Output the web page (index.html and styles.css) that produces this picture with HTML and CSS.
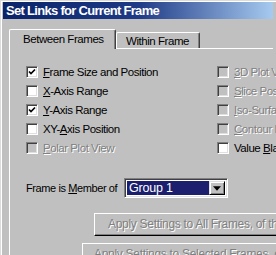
FILE: index.html
```html
<!DOCTYPE html>
<html>
<head>
    <title>Set Links for Current Frame</title>
    <link rel="stylesheet" href="styles.css">
</head>
<body>
    <div class="window">
        <div class="titlebar">Set Links for Current Frame</div>

        <div class="tabs">
            <div class="tab active">Between Frames</div>
            <div class="tab">Within Frame</div>
        </div>

        <div class="panel">
            <div class="options">
                <label class="check"><span class="box checked"><svg viewBox="0 0 8 8"><path d="M1 3.5 L3 5.5 L7 1.5"/></svg></span><span><u>F</u>rame Size and Position</span></label>
                <label class="check disabled"><span class="box"></span><span><u>3</u>D Plot View</span></label>

                <label class="check"><span class="box"></span><span><u>X</u>-Axis Range</span></label>
                <label class="check disabled"><span class="box"></span><span><u>S</u>lice Position</span></label>

                <label class="check"><span class="box checked"><svg viewBox="0 0 8 8"><path d="M1 3.5 L3 5.5 L7 1.5"/></svg></span><span><u>Y</u>-Axis Range</span></label>
                <label class="check disabled"><span class="box"></span><span><u>I</u>so-Surfaces</span></label>

                <label class="check"><span class="box"></span><span>XY-<u>A</u>xis Position</span></label>
                <label class="check disabled"><span class="box"></span><span><u>C</u>ontour Levels</span></label>

                <label class="check disabled"><span class="box"></span><span><u>P</u>olar Plot View</span></label>
                <label class="check"><span class="box"></span><span>Value <u>B</u>lanking</span></label>
            </div>

            <div class="group-row">
                <span class="group-label">Frame is <u>M</u>ember of</span>
                <div class="combo">
                    <span class="combo-value">Group 1</span>
                    <span class="combo-arrow"><svg viewBox="0 0 7 4"><path d="M0 0 H7 L3.5 4 Z"/></svg></span>
                </div>
            </div>

            <div class="btn btn-all">Apply Settings to All Frames, of this Group</div>
            <div class="btn btn-selected">Apply Settings to Selected Frames, of this Group</div>
        </div>
    </div>
</body>
</html>
```

FILE: styles.css
```css
body {
    margin: 0;
    font-family: "Liberation Sans", Arial, sans-serif;
    font-size: 11.5px;
    letter-spacing: -0.45px;
    color: #000;
    background: #c0c0c0;
}
u {
    text-decoration: underline;
    text-underline-offset: 1px;
}
.window {
    width: 276px;
    height: 255px;
    box-sizing: border-box;
    overflow: hidden;
    background: #c0c0c0;
    border-left: 1px solid #dcdcdc;
    border-top: 1px solid #dcdcdc;
    box-shadow: inset 1px 1px #fff;
    padding: 1px 3px 0 2px;
}
.titlebar {
    height: 17px;
    line-height: 17px;
    padding-left: 3px;
    color: #fff;
    font-size: 13px;
    font-weight: bold;
    letter-spacing: -0.7px;
    white-space: nowrap;
    background: linear-gradient(to right, #0a246a, #1f3a86 50%, #a6caf0);
}
.tabs {
    display: flex;
    align-items: flex-end;
    margin: 10px 0 0 6px;
    position: relative;
    z-index: 1;
}
.tab {
    box-sizing: border-box;
    height: 16px;
    width: 84px;
    padding: 2px 0 0 9px;
    border-top: 1px solid #fff;
    border-left: 1px solid #fff;
    border-right: 1px solid #404040;
    box-shadow: inset -1px 0 #808080;
    border-radius: 2px 2px 0 0;
    line-height: 13px;
    white-space: nowrap;
}
.tab.active {
    height: 20px;
    width: 107px;
    padding: 3px 0 0 13px;
    margin-bottom: -1px;
    background: #c0c0c0;
}
.panel {
    margin-left: 6px;
    border-top: 1px solid #fff;
    border-left: 1px solid #fff;
    padding: 17px 0 0 16px;
    height: 220px;
}
.options {
    display: grid;
    grid-template-columns: 191px auto;
    grid-auto-rows: 12px;
    row-gap: 7px;
}
.check {
    display: flex;
    align-items: center;
    gap: 5px;
    white-space: nowrap;
    line-height: 12px;
}
.box {
    box-sizing: border-box;
    width: 12px;
    height: 12px;
    flex: none;
    background: #fff;
    border-top: 1px solid #808080;
    border-left: 1px solid #808080;
    border-right: 1px solid #fff;
    border-bottom: 1px solid #fff;
    box-shadow: inset 1px 1px #404040, inset -1px -1px #dfdfdf;
    display: flex;
    align-items: center;
    justify-content: center;
}
.box svg {
    width: 8px;
    height: 8px;
}
.box path {
    fill: none;
    stroke: #000;
    stroke-width: 1.7;
}
.disabled {
    color: #808080;
    text-shadow: 1px 1px #fff;
}
.disabled .box {
    background: #c0c0c0;
}
.group-row {
    display: flex;
    align-items: center;
    margin-top: 24px;
}
.group-label {
    width: 98px;
    font-size: 11px;
    letter-spacing: -0.4px;
    white-space: nowrap;
}
.combo {
    box-sizing: border-box;
    width: 104px;
    height: 20px;
    display: flex;
    padding: 2px;
    background: #fff;
    border-top: 1px solid #808080;
    border-left: 1px solid #808080;
    border-right: 1px solid #fff;
    border-bottom: 1px solid #fff;
    box-shadow: inset 1px 1px #404040, inset -1px -1px #dfdfdf;
}
.combo-value {
    flex: 1;
    background: #1b1f6e;
    color: #fff;
    padding-left: 2px;
    line-height: 14px;
    font-size: 12.5px;
    letter-spacing: -0.2px;
}
.combo-arrow {
    box-sizing: border-box;
    width: 16px;
    flex: none;
    background: #c0c0c0;
    border-top: 1px solid #dfdfdf;
    border-left: 1px solid #dfdfdf;
    border-right: 1px solid #000;
    border-bottom: 1px solid #000;
    box-shadow: inset 1px 1px #fff, inset -1px -1px #808080;
    display: flex;
    align-items: center;
    justify-content: center;
}
.combo-arrow svg {
    width: 8px;
    height: 5px;
}
.btn {
    box-sizing: border-box;
    height: 23px;
    line-height: 21px;
    white-space: nowrap;
    color: #808080;
    text-shadow: 1px 1px #fff;
    font-size: 12px;
    letter-spacing: -0.3px;
    border-top: 1px solid #fff;
    border-left: 1px solid #fff;
    border-right: 1px solid #000;
    border-bottom: 1px solid #000;
    box-shadow: inset -1px -1px #808080;
}
.btn-all {
    width: 250px;
    margin: 15px 0 0 68px;
    padding-left: 13px;
}
.btn-selected {
    width: 274px;
    margin: 7px 0 0 56px;
    padding-left: 11px;
}
```
